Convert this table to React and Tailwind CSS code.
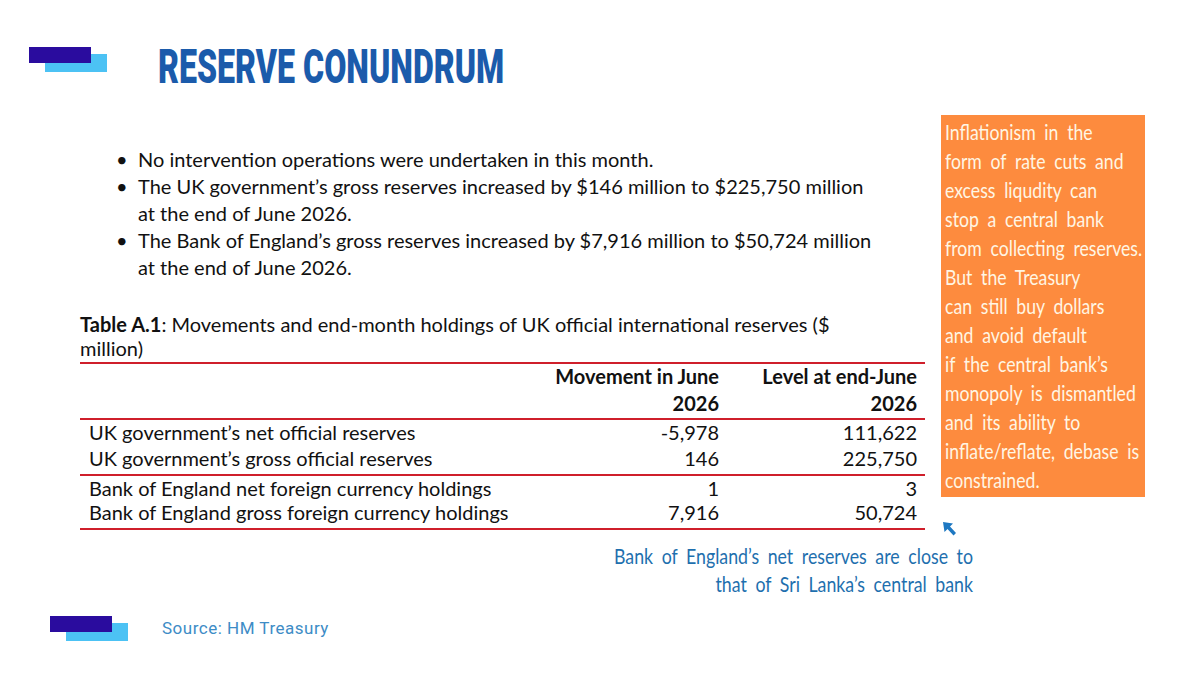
import React from "react";

const lato = "font-['Lato',sans-serif]";

const boxLines = [
  "Inflationism in the",
  "form of rate cuts and",
  "excess liqudity can",
  "stop a central bank",
  "from collecting reserves.",
  "But the Treasury",
  "can still buy dollars",
  "and avoid default",
  "if the central bank’s",
  "monopoly is dismantled",
  "and its ability to",
  "inflate/reflate, debase is",
  "constrained.",
];

const rows = [
  ["UK government’s net official reserves", "-5,978", "111,622", "h-[24px] pb-[8px]"],
  ["UK government’s gross official reserves", "146", "225,750", "h-[32px] pb-[2px] border-b-2 border-[#cf1f2b]"],
  ["Bank of England net foreign currency holdings", "1", "3", "h-[24px] pb-[8px]"],
  ["Bank of England gross foreign currency holdings", "7,916", "50,724", "h-[28px] pb-[4px]"],
];

function Bars() {
  return (
    <div className="relative h-[25px] w-[78px] shrink-0">
      <div className="absolute left-[16px] top-[7px] h-[18px] w-[62px] bg-[#4cc2f4]" />
      <div className="absolute left-0 top-0 h-[16px] w-[62px] bg-[#2a0c9e]" />
    </div>
  );
}

export default function App() {
  return (
    <div className={`h-[677px] w-[1200px] overflow-hidden bg-white pt-[47px] ${lato} text-[#111]`}>
      {/* header */}
      <div className="flex h-[43px] items-start pl-[29px]">
        <Bars />
        <div className="ml-[51px] mt-[-5px] h-[50px] w-[360px]">
          <h1 className="origin-left scale-x-[0.67] whitespace-nowrap font-['Roboto',sans-serif] text-[48px] font-black leading-[50px] text-[#1b5bab]">
            RESERVE CONUNDRUM
          </h1>
        </div>
      </div>

      {/* body */}
      <div className="flex pl-[80px]">
        <div className="w-[845px]">
          <ul className="ml-[36px] mt-[56px] text-[20px] leading-[27px]">
            <li className="flex">
              <span className="w-[22px]">•</span>
              <span>No intervention operations were undertaken in this month.</span>
            </li>
            <li className="flex">
              <span className="w-[22px]">•</span>
              <span>
                The UK government’s gross reserves increased by $146 million to $225,750 million
                <br />
                at the end of June 2026.
              </span>
            </li>
            <li className="flex">
              <span className="w-[22px]">•</span>
              <span>
                The Bank of England’s gross reserves increased by $7,916 million to $50,724 million
                <br />
                at the end of June 2026.
              </span>
            </li>
          </ul>

          <p className="mt-[31px] whitespace-nowrap text-[20px] leading-[24px]">
            <span className="font-bold">Table A.1</span>: Movements and end-month holdings of UK official
            international reserves ($
            <br />
            million)
          </p>

          <div className="mt-[2px] border-y-2 border-[#cf1f2b] text-[20px] leading-[24px]">
            <div className="grid h-[26px] grid-cols-[1fr_180px_206px] items-center pb-[8px] font-bold">
              <div />
              <div className="text-right">Movement in June</div>
              <div className="pr-[8px] text-right">Level at end-June</div>
            </div>
            <div className="grid h-[30px] grid-cols-[1fr_180px_206px] items-center border-b-2 border-[#cf1f2b] pb-[2px] font-bold">
              <div />
              <div className="text-right">2026</div>
              <div className="pr-[8px] text-right">2026</div>
            </div>
            {rows.map(([label, move, level, cls]) => (
              <div key={label} className={`grid grid-cols-[1fr_180px_206px] items-center ${cls}`}>
                <div className="pl-[9px]">{label}</div>
                <div className="text-right">{move}</div>
                <div className="pr-[8px] text-right">{level}</div>
              </div>
            ))}
          </div>
        </div>

        <div className="ml-[16px] mt-[25px] h-[382px] w-[204px] bg-[#fd8b3e] pl-[4px] pt-[2px]">
          <div className="w-[240px] origin-left scale-x-[0.84]">
            {boxLines.map((l) => (
              <div
                key={l}
                className="whitespace-nowrap text-[21px] leading-[29px] text-[#fff6e4] [word-spacing:5px]"
              >
                {l}
              </div>
            ))}
          </div>
        </div>
      </div>

      {/* note */}
      <div className="relative ml-[600px] mt-[12px] w-[373px]">
        <svg
          className="absolute right-[16px] top-[-21px]"
          width="15"
          height="16"
          viewBox="0 0 15 16"
        >
          <path d="M1 1 L11 2.5 L8 5.5 L14 12 L11.5 14.5 L5.5 8 L2.5 11 Z" fill="#1e78c2" />
        </svg>
        <p className="ml-[-105px] w-[478px] origin-right scale-x-[0.807] whitespace-nowrap text-right text-[22px] leading-[28px] text-[#1e6fae] [word-spacing:5px]">
          Bank of England’s net reserves are close to
          <br />
          that of Sri Lanka’s central bank
        </p>
      </div>

      {/* footer */}
      <div className="mt-[18px] flex items-center pl-[50px]">
        <Bars />
        <span className="ml-[34px] font-['Roboto',sans-serif] text-[17px] font-normal tracking-[0.5px] text-[#3d8cc6]">
          Source: HM Treasury
        </span>
      </div>
    </div>
  );
}
